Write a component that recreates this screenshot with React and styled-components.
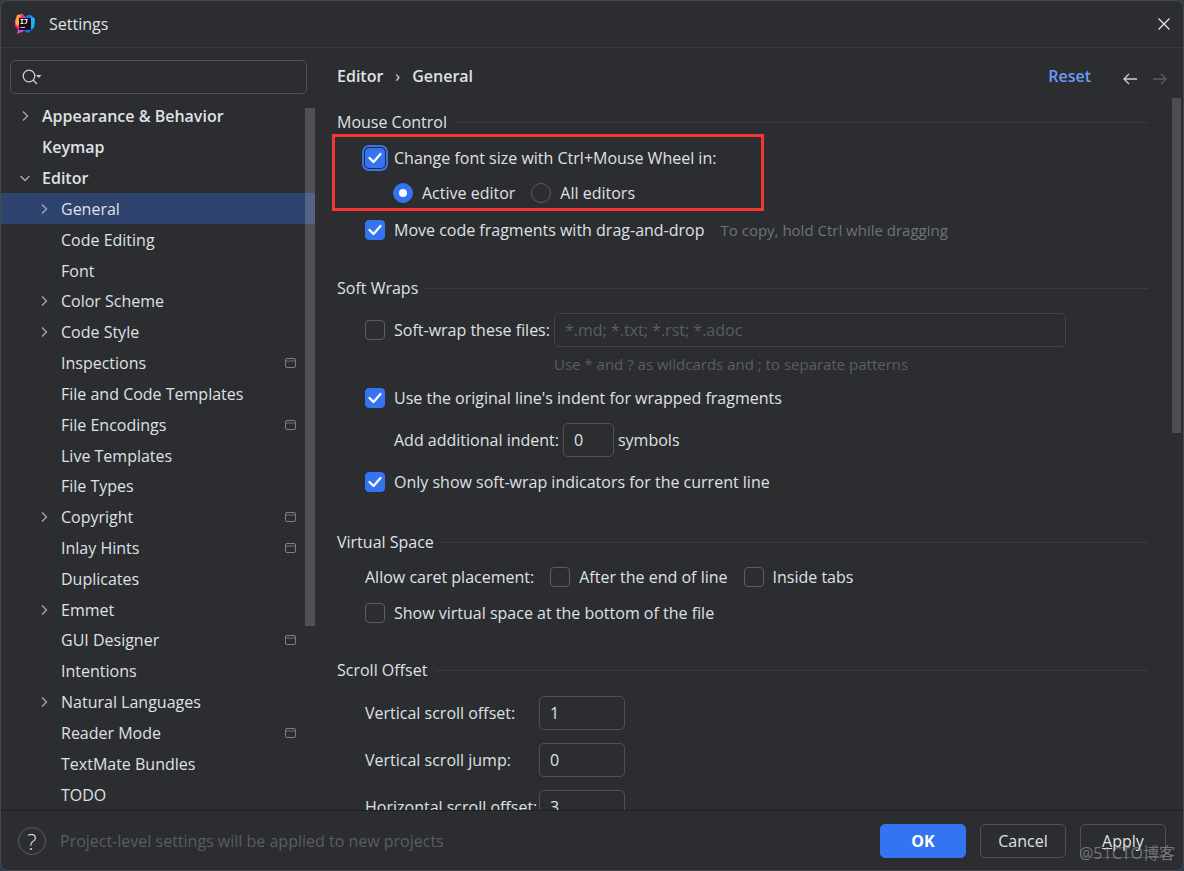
import React, { useState } from "react";
import styled, { createGlobalStyle, css } from "styled-components";

const tree = [
  { name: "Appearance & Behavior", level: 0, arrow: "right" },
  { name: "Keymap", level: 0 },
  { name: "Editor", level: 0, arrow: "down" },
  { name: "General", level: 1, arrow: "right" },
  { name: "Code Editing", level: 1 },
  { name: "Font", level: 1 },
  { name: "Color Scheme", level: 1, arrow: "right" },
  { name: "Code Style", level: 1, arrow: "right" },
  { name: "Inspections", level: 1, project: true },
  { name: "File and Code Templates", level: 1 },
  { name: "File Encodings", level: 1, project: true },
  { name: "Live Templates", level: 1 },
  { name: "File Types", level: 1 },
  { name: "Copyright", level: 1, arrow: "right", project: true },
  { name: "Inlay Hints", level: 1, project: true },
  { name: "Duplicates", level: 1 },
  { name: "Emmet", level: 1, arrow: "right" },
  { name: "GUI Designer", level: 1, project: true },
  { name: "Intentions", level: 1 },
  { name: "Natural Languages", level: 1, arrow: "right" },
  { name: "Reader Mode", level: 1, project: true },
  { name: "TextMate Bundles", level: 1 },
  { name: "TODO", level: 1 },
];

function Logo() {
  return (
    <svg width="20" height="20" viewBox="0 0 20 20" aria-hidden="true">
      <path d="M0 7l2-6 5-1 3 3v4l-6 4z" fill="#fc9a3c" />
      <path d="M0 7l4 1 2 6 3 3-7 3 1-5-3-3z" fill="#fe2d7b" />
      <path d="M6 0l4 3 1 4-6-1z" fill="#f5317f" />
      <path d="M0 8l3-2 2 3-3 3z" fill="#fdb82c" />
      <path d="M10 3l3-2 3 0 4 4-1 9-6 5-5-3z" fill="#087cfa" />
      <path d="M16 2l4 3-1 8-3 2z" fill="#14b8f7" />
      <path d="M2 19l2-4 5 1-2 2z" fill="#c24be0" />
      <rect x="4" y="4" width="12" height="12" fill="#190a14" />
      <path
        d="M5.500 5.500h3M7 5.500v4M5.500 9.500h3M9.500 5.500h3M11.700 5.500v2.800q0 1.200-2.200 1.200"
        fill="none"
        stroke="#fff"
        strokeWidth="1.100"
      />
      <path d="M5.500 13.500h4.500" stroke="#c8c8c8" strokeWidth="1" />
    </svg>
  );
}

function Chevron({ direction }) {
  return (
    <svg width="12" height="12" viewBox="0 0 12 12" aria-hidden="true">
      <path
        d={direction === "down" ? "M1.500 4l4.500 4.500L10.500 4" : "M4 1.500L8.500 6 4 10.500"}
        fill="none"
        stroke="#a8abb0"
        strokeWidth="1.300"
      />
    </svg>
  );
}

function ProjectIcon() {
  return (
    <svg width="11" height="10" viewBox="0 0 11 10" aria-hidden="true">
      <rect x="0.500" y="0.500" width="10" height="9" rx="1.500" fill="none" stroke="#7c7f86" />
      <path d="M1 3h9" stroke="#6f737a" />
    </svg>
  );
}

function Check({ label, defaultChecked, focused }) {
  const [checked, setChecked] = useState(!!defaultChecked);
  return (
    <CheckLabel>
      <CheckBox
        type="checkbox"
        checked={checked}
        onChange={(e) => setChecked(e.target.checked)}
        $focused={focused}
      />
      {label}
    </CheckLabel>
  );
}

function App() {
  const [selected, setSelected] = useState("General");
  const [scope, setScope] = useState("active");

  return (
    <Dialog>
      <GlobalStyle />
      <TitleBar>
        <Logo />
        <Title>Settings</Title>
        <IconButton aria-label="Close">
          <svg width="14" height="14" viewBox="0 0 14 14">
            <path d="M1.500 1.500l11 11M12.500 1.500l-11 11" stroke="#e6e7ea" strokeWidth="1.300" />
          </svg>
        </IconButton>
      </TitleBar>

      <Body>
        <Sidebar>
          <SearchBox>
            <svg width="22" height="16" viewBox="0 0 22 16" aria-hidden="true">
              <circle cx="7" cy="7" r="5.800" fill="none" stroke="#ced0d6" strokeWidth="1.300" />
              <path d="M11 11l4 4" stroke="#ced0d6" strokeWidth="1.300" />
              <path d="M14 6h5.500L16.700 9z" fill="#ced0d6" />
            </svg>
            <SearchInput type="text" aria-label="Search settings" />
          </SearchBox>
          <TreeArea>
            <Tree>
              {tree.map((item) => (
                <TreeRow
                  key={item.name}
                  $level={item.level}
                  $selected={item.name === selected}
                  onClick={() => setSelected(item.name)}
                >
                  <ArrowSlot>{item.arrow && <Chevron direction={item.arrow} />}</ArrowSlot>
                  <TreeName>{item.name}</TreeName>
                  {item.project && <ProjectIcon />}
                </TreeRow>
              ))}
            </Tree>
            <TreeThumb />
          </TreeArea>
        </Sidebar>

        <Content>
          <Header>
            <Crumbs>
              <span>Editor</span>
              <CrumbSeparator>›</CrumbSeparator>
              <span>General</span>
            </Crumbs>
            <ResetLink href="#reset">Reset</ResetLink>
            <NavButton aria-label="Back">
              <svg width="14" height="12" viewBox="0 0 14 12">
                <path d="M14 6H1M6 1L1 6l5 5" fill="none" stroke="#ced0d6" strokeWidth="1.300" />
              </svg>
            </NavButton>
            <NavButton aria-label="Forward" disabled>
              <svg width="14" height="12" viewBox="0 0 14 12">
                <path d="M0 6h13M8 1l5 5-5 5" fill="none" stroke="#5a5d63" strokeWidth="1.300" />
              </svg>
            </NavButton>
          </Header>

          <ScrollArea>
            <Page>
              <Section>
                <SectionTitle>Mouse Control</SectionTitle>
                <Highlight>
                  <Check label="Change font size with Ctrl+Mouse Wheel in:" defaultChecked focused />
                  <RadioRow>
                    <CheckLabel>
                      <Radio
                        type="radio"
                        name="scope"
                        checked={scope === "active"}
                        onChange={() => setScope("active")}
                      />
                      Active editor
                    </CheckLabel>
                    <CheckLabel>
                      <Radio
                        type="radio"
                        name="scope"
                        checked={scope === "all"}
                        onChange={() => setScope("all")}
                      />
                      All editors
                    </CheckLabel>
                  </RadioRow>
                </Highlight>
                <Row $height={38} $gap={16}>
                  <Check label="Move code fragments with drag-and-drop" defaultChecked />
                  <Hint>To copy, hold Ctrl while dragging</Hint>
                </Row>
              </Section>

              <Section>
                <SectionTitle>Soft Wraps</SectionTitle>
                <Rows $top={10}>
                  <Row $height={42} $gap={4}>
                    <Check label="Soft-wrap these files:" />
                    <PatternInput
                      type="text"
                      aria-label="Soft-wrap file patterns"
                      placeholder="*.md; *.txt; *.rst; *.adoc"
                    />
                  </Row>
                  <PatternHint>Use * and ? as wildcards and ; to separate patterns</PatternHint>
                  <Row $height={42}>
                    <Check label="Use the original line's indent for wrapped fragments" defaultChecked />
                  </Row>
                  <Row $height={42} $gap={4} $nested>
                    <label htmlFor="indent">Add additional indent:</label>
                    <Field id="indent" type="text" defaultValue="0" $width={51} />
                    <span>symbols</span>
                  </Row>
                  <Row $height={42}>
                    <Check label="Only show soft-wrap indicators for the current line" defaultChecked />
                  </Row>
                </Rows>
              </Section>

              <Section>
                <SectionTitle>Virtual Space</SectionTitle>
                <Rows $top={6}>
                  <Row $height={36} $gap={16}>
                    <span>Allow caret placement:</span>
                    <Check label="After the end of line" />
                    <Check label="Inside tabs" />
                  </Row>
                  <Row $height={36}>
                    <Check label="Show virtual space at the bottom of the file" />
                  </Row>
                </Rows>
              </Section>

              <Section>
                <SectionTitle>Scroll Offset</SectionTitle>
                <FieldGrid>
                  <label htmlFor="v-offset">Vertical scroll offset:</label>
                  <Field id="v-offset" type="text" defaultValue="1" $width={86} />
                  <label htmlFor="v-jump">Vertical scroll jump:</label>
                  <Field id="v-jump" type="text" defaultValue="0" $width={86} />
                  <label htmlFor="h-offset">Horizontal scroll offset:</label>
                  <Field id="h-offset" type="text" defaultValue="3" $width={86} />
                </FieldGrid>
              </Section>
            </Page>
            <PageThumb />
          </ScrollArea>
        </Content>
      </Body>

      <Footer>
        <HelpButton aria-label="Help">?</HelpButton>
        <FooterNote>Project-level settings will be applied to new projects</FooterNote>
        <Button $primary>OK</Button>
        <Button>Cancel</Button>
        <Button>
          <u>A</u>pply
        </Button>
      </Footer>
      <Watermark>@51CTO博客</Watermark>
    </Dialog>
  );
}

export default App;

const GlobalStyle = createGlobalStyle`
  * {
    box-sizing: border-box;
  }
  body {
    margin: 0;
    background: #2f3f50;
    color: #dfe1e5;
    font: 16px/22px "Open Sans", "Noto Sans CJK SC", sans-serif;
  }
  button, input {
    font: inherit;
    color: inherit;
  }
`;

const Dialog = styled.main`
  position: relative;
  display: flex;
  flex-direction: column;
  height: 100vh;
  overflow: hidden;
  background: #2b2d30;
  border: 1px solid #46484b;
  border-radius: 8px;
`;

const TitleBar = styled.header`
  display: flex;
  align-items: center;
  gap: 14px;
  height: 47px;
  flex-shrink: 0;
  padding: 0 12px 0 14px;
  border-bottom: 1px solid #393b40;
`;

const Title = styled.h1`
  flex: 1;
  margin: 0;
  font-size: 16px;
  font-weight: 400;
`;

const IconButton = styled.button`
  display: flex;
  padding: 0;
  border: 0;
  background: none;
`;

const Body = styled.div`
  display: flex;
  flex: 1;
  min-height: 0;
`;

const Sidebar = styled.nav`
  display: flex;
  flex-direction: column;
  width: 314px;
  flex-shrink: 0;
`;

const SearchBox = styled.label`
  display: flex;
  align-items: center;
  gap: 6px;
  height: 34px;
  flex-shrink: 0;
  margin: 12px 8px 7px 9px;
  padding: 0 11px;
  border: 1px solid #4e5157;
  border-radius: 5px;
`;

const SearchInput = styled.input`
  flex: 1;
  min-width: 0;
  padding: 0;
  border: 0;
  outline: 0;
  background: none;
`;

const TreeArea = styled.div`
  position: relative;
  flex: 1;
  min-height: 0;
`;

const Tree = styled.ul`
  display: flex;
  flex-direction: column;
  height: 100%;
  margin: 0;
  padding: 0;
  list-style: none;
`;

const TreeRow = styled.li`
  display: flex;
  align-items: center;
  flex: 1;
  min-height: 22px;
  padding-left: ${(props) => (props.$level ? 37 : 18)}px;
  padding-right: 19px;
  font-weight: ${(props) => (props.$level ? 400 : 600)};
  background: ${(props) => (props.$selected ? "#2e436e" : "none")};
`;

const ArrowSlot = styled.span`
  display: flex;
  width: 23px;
`;

const TreeName = styled.span`
  flex: 1;
  white-space: nowrap;
`;

const TreeThumb = styled.div`
  position: absolute;
  top: 7px;
  right: 0;
  width: 10px;
  height: 73%;
  background: rgba(255, 255, 255, 0.18);
`;

const Content = styled.section`
  display: flex;
  flex-direction: column;
  flex: 1;
  min-width: 0;
`;

const Header = styled.div`
  display: flex;
  align-items: center;
  height: 50px;
  flex-shrink: 0;
  padding: 6px 16px 0 22px;
`;

const Crumbs = styled.div`
  display: flex;
  gap: 12px;
  flex: 1;
  font-weight: 600;
`;

const CrumbSeparator = styled.span`
  font-weight: 400;
`;

const ResetLink = styled.a`
  margin-right: 16px;
  color: #6b9bfa;
  font-weight: 600;
  text-decoration: none;
`;

const NavButton = styled(IconButton)`
  padding: 5px 0 0 16px;
`;

const ScrollArea = styled.div`
  display: flex;
  justify-content: space-between;
  flex: 1;
  min-height: 0;
  overflow: hidden;
`;

const Page = styled.div`
  flex: 1;
  min-width: 0;
  padding: 13px 24px 0 22px;
`;

const PageThumb = styled.div`
  width: 9px;
  height: 47%;
  margin-right: 2px;
  background: #4d4e51;
`;

const Section = styled.section`
  margin-bottom: 28px;
`;

const SectionTitle = styled.h2`
  display: flex;
  align-items: center;
  gap: 8px;
  margin: 0;
  font-size: 16px;
  font-weight: 400;

  &::after {
    content: "";
    flex: 1;
    height: 1px;
    background: #393b40;
  }
`;

const Rows = styled.div`
  padding-top: ${(props) => props.$top}px;
`;

const Row = styled.div`
  display: flex;
  align-items: center;
  gap: ${(props) => props.$gap || 0}px;
  height: ${(props) => props.$height}px;
  padding-left: ${(props) => (props.$nested ? 57 : 28)}px;
  white-space: nowrap;
`;

const Highlight = styled.div`
  display: flex;
  flex-direction: column;
  gap: 13px;
  width: 432px;
  margin: 1px 0 0 -5px;
  padding: 10px 0 4px 30px;
  border: 3px solid #f93434;
`;

const RadioRow = styled.div`
  display: flex;
  gap: 16px;
  padding-left: 28px;
`;

const CheckLabel = styled.label`
  display: flex;
  align-items: center;
  gap: 9px;
  white-space: nowrap;
`;

const CheckBox = styled.input`
  appearance: none;
  width: 20px;
  height: 20px;
  flex-shrink: 0;
  margin: 0;
  border: 1px solid #5a5d63;
  border-radius: 4px;

  &:checked {
    border-color: #3574f0;
    background: #3574f0
      url("data:image/svg+xml,%3Csvg xmlns='http://www.w3.org/2000/svg' viewBox='0 0 18 18'%3E%3Cpath d='M3.500 9l4 4L14.500 5' fill='none' stroke='white' stroke-width='2.300' stroke-linecap='round' stroke-linejoin='round'/%3E%3C/svg%3E")
      center / 18px no-repeat;
  }

  ${(props) =>
    props.$focused &&
    css`
      outline: 2px solid #3574f0;
      outline-offset: 1px;
    `}
`;

const Radio = styled.input`
  appearance: none;
  display: grid;
  place-items: center;
  width: 20px;
  height: 20px;
  margin: 0;
  border: 1px solid #5a5d63;
  border-radius: 50%;

  &:checked {
    border-color: #3574f0;
    background: #3574f0;
  }

  &:checked::after {
    content: "";
    width: 8px;
    height: 8px;
    border-radius: 50%;
    background: #fff;
  }
`;

const Hint = styled.span`
  color: #6f737a;
  font-size: 15px;
`;

const Field = styled.input`
  width: ${(props) => props.$width}px;
  height: 34px;
  padding: 0 10px;
  border: 1px solid #4e5157;
  border-radius: 5px;
  background: none;
`;

const PatternInput = styled(Field)`
  flex: 1;
  margin-right: 82px;
  border-color: #43454a;

  &::placeholder {
    color: #5a5d63;
    opacity: 1;
  }
`;

const PatternHint = styled.p`
  margin: 2px 0;
  padding-left: 217px;
  color: #5a5d63;
  font-size: 15px;
`;

const FieldGrid = styled.div`
  display: grid;
  grid-template-columns: 170px auto;
  align-items: center;
  justify-content: start;
  gap: 13px 4px;
  padding: 15px 0 0 28px;
  white-space: nowrap;
`;

const Footer = styled.footer`
  display: flex;
  align-items: center;
  gap: 14px;
  height: 60px;
  flex-shrink: 0;
  padding: 0 17px;
  border-top: 1px solid #1e1f22;
`;

const HelpButton = styled.button`
  width: 28px;
  height: 28px;
  padding: 0;
  border: 1px solid #5a5d63;
  border-radius: 50%;
  background: none;
  font-size: 22px;
  font-weight: 300;
  line-height: 24px;
`;

const FooterNote = styled.span`
  flex: 1;
  color: #5a5d63;
`;

const Button = styled.button`
  width: 86px;
  height: 34px;
  padding: 0;
  border: 1px solid ${(props) => (props.$primary ? "#3574f0" : "#4e5157")};
  border-radius: 5px;
  background: ${(props) => (props.$primary ? "#3574f0" : "none")};
  color: ${(props) => (props.$primary ? "#fff" : "#dfe1e5")};
  font-weight: ${(props) => (props.$primary ? 700 : 400)};
`;

const Watermark = styled.span`
  position: absolute;
  right: 8px;
  bottom: 6px;
  color: rgba(190, 190, 190, 0.5);
  font-size: 16px;
  pointer-events: none;
`;
